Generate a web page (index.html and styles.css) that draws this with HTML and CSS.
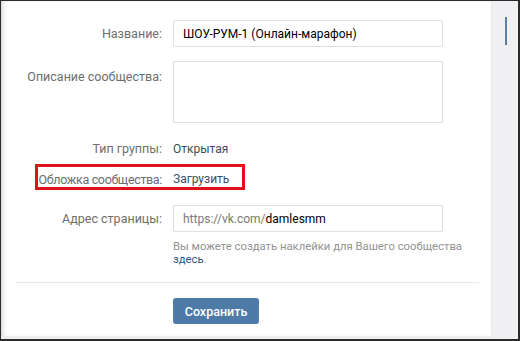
FILE: index.html
```html
<!DOCTYPE html>
<html lang="ru">
<head>
    <meta charset="UTF-8">
    <title>Управление сообществом</title>
    <link rel="stylesheet" href="styles.css">
</head>
<body>
    <div class="frame">
        <div class="panel">
            <div class="row row-name">
                <div class="label">Название:</div>
                <input class="field" type="text" value="ШОУ-РУМ-1 (Онлайн-марафон)">
            </div>
            <div class="row row-top">
                <div class="label label-top">Описание сообщества:</div>
                <textarea class="field area"></textarea>
            </div>
            <div class="row row-type">
                <div class="label">Тип группы:</div>
                <div class="value">Открытая</div>
            </div>
            <div class="row row-cover">
                <div class="label">Обложка сообщества:</div>
                <div class="value">Загрузить</div>
            </div>
            <div class="row row-addr">
                <div class="label">Адрес страницы:</div>
                <div class="field addr"><span class="prefix">https://vk.com/</span>damlesmm</div>
            </div>
            <div class="row">
                <div class="label"></div>
                <div class="hint">Вы можете создать наклейки для Вашего сообщества<br><a href="#">здесь</a>.</div>
            </div>
            <div class="sep"></div>
            <div class="row">
                <div class="label"></div>
                <button class="save">Сохранить</button>
            </div>
        </div>
        <div class="side">
            <div class="thumb"></div>
        </div>
    </div>
</body>
</html>
```

FILE: styles.css
```css
body { margin: 0; font-family: Roboto, "Open Sans", Arial, sans-serif; font-size: 12.5px; }
.frame { width: 520px; height: 341px; box-sizing: border-box; border: 1px solid #2b2b2b; border-bottom-width: 2px; border-right-width: 2px; display: flex; background: #fff; }
.panel { flex: 1; background: #fff; padding-top: 19px; padding-left: 4px; box-shadow: inset 4px 0 4px -2px #d8d8d8; border-bottom: 3px solid #eeeeef; }
.side { width: 26px; background: #f0f0f2; border-left: 1px solid #e9e9eb; }
.thumb { width: 2px; height: 28px; background: #5b80a8; margin: 16px 0 0 13px; }
.row { display: flex; align-items: center; }
.label { width: 157px; padding-right: 11px; text-align: right; color: #6e6e6e; flex-shrink: 0; }
.label-top { align-self: flex-start; padding-top: 8px; }
.field { width: 270px; box-sizing: border-box; height: 27px; border: 1px solid #dcdfe3; border-radius: 2px; padding: 0 9px; font: inherit; font-size: 12px; color: #000; background: #fff; }
.area { height: 62px; resize: none; }
.row-top { margin-top: 14px; }
.row-type { margin-top: 18px; }
.row-cover { margin-top: 13px; height: 20px; position: relative; }
.row-cover .label { letter-spacing: -0.35px; }
.row-cover::after { content: ""; position: absolute; left: 30px; top: -5px; width: 204px; height: 20px; border: 3px solid #e0111b; }
.value { color: #3d4b5c; font-size: 12px; }
.row-addr { margin-top: 16px; }
.addr { display: flex; align-items: center; }
.prefix { color: #7a7a7a; }
.hint { color: #929292; font-size: 11.3px; line-height: 13px; margin-top: 8px; white-space: nowrap; }
.hint a { color: #2a5885; text-decoration: none; }
.sep { height: 1px; background: #e7e8ec; margin: 16px 12px 0 11px; }
.save { margin-top: 15px; width: 86px; height: 26px; border: none; border-radius: 3px; background: #4e7aa8; color: #fff; font: inherit; font-size: 12.5px; font-weight: 500; }
```
